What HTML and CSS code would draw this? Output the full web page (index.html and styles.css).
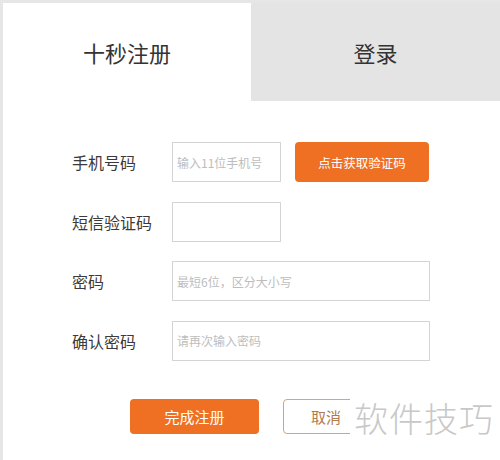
FILE: index.html
```html
<!DOCTYPE html>
<html lang="zh-CN">
<head>
    <meta charset="UTF-8">
    <meta name="viewport" content="width=device-width, initial-scale=1.0">
    <title>十秒注册</title>
    <link rel="stylesheet" href="styles.css">
</head>
<body>
    <div class="panel">
        <div class="tabs">
            <div class="tab active">十秒注册</div>
            <div class="tab">登录</div>
        </div>
        <form class="reg-form">
            <div class="row">
                <label class="label">手机号码</label>
                <input class="field short" type="text" placeholder="输入11位手机号">
                <button class="btn-code" type="button">点击获取验证码</button>
            </div>
            <div class="row">
                <label class="label">短信验证码</label>
                <input class="field short" type="text">
            </div>
            <div class="row">
                <label class="label">密码</label>
                <input class="field long" type="password" placeholder="最短6位，区分大小写">
            </div>
            <div class="row">
                <label class="label">确认密码</label>
                <input class="field long" type="password" placeholder="请再次输入密码">
            </div>
            <div class="actions">
                <button class="btn-submit" type="submit">完成注册</button>
                <button class="btn-cancel" type="button">取消</button>
            </div>
        </form>
    </div>
    <div class="watermark">软件技巧</div>
</body>
</html>
```

FILE: styles.css
```css
html, body {
    height: 100%;
}
body {
    margin: 0;
    padding: 3px 0 0 3px;
    box-sizing: border-box;
    background-color: #e6e6e6;
    font-family: "Noto Sans CJK SC", "Liberation Sans", sans-serif;
    color: #333;
    position: relative;
    overflow: hidden;
}
.panel {
    background-color: #fff;
    height: 100%;
}
.tabs {
    display: flex;
    height: 98px;
}
.tab {
    display: flex;
    align-items: center;
    justify-content: center;
    font-size: 22px;
    color: #333;
    background-color: #e4e4e4;
    flex: 1;
}
.tab.active {
    flex: 0 0 248px;
    background-color: #fff;
}
.reg-form {
    padding: 41px 0 0 69px;
}
.row {
    display: flex;
    align-items: center;
    height: 40px;
    margin-bottom: 19.5px;
}
.label {
    width: 100px;
    font-size: 16px;
    color: #3a3a3a;
}
.field {
    box-sizing: border-box;
    height: 40px;
    border: 1px solid #d4d4d4;
    padding: 0 4px;
    font-size: 12px;
    font-family: inherit;
    color: #333;
    outline: none;
}
.field::placeholder {
    color: #bdbdbd;
}
.field.short {
    width: 109px;
}
.field.long {
    width: 258px;
}
.btn-code {
    margin-left: 14px;
    width: 134px;
    height: 40px;
    border: none;
    border-radius: 4px;
    background-color: #ef7023;
    color: #fff;
    font-size: 12.5px;
    font-family: inherit;
    cursor: pointer;
}
.actions {
    display: flex;
    gap: 24px;
    padding: 19px 0 0 58px;
}
.btn-submit, .btn-cancel {
    box-sizing: border-box;
    height: 35px;
    border-radius: 4px;
    font-size: 15px;
    font-family: inherit;
    cursor: pointer;
}
.btn-submit {
    width: 129px;
    border: none;
    background-color: #ef7023;
    color: #fff;
}
.btn-cancel {
    width: 86px;
    border: 1px solid #c9a888;
    background-color: #fff;
    color: #b07a50;
}
.watermark {
    position: absolute;
    left: 350px;
    top: 396px;
    padding: 0 6px 0 4px;
    background-color: #fff;
    font-size: 34px;
    font-weight: 300;
    line-height: 44px;
    letter-spacing: 1px;
    color: #c8c8c8;
}
```
